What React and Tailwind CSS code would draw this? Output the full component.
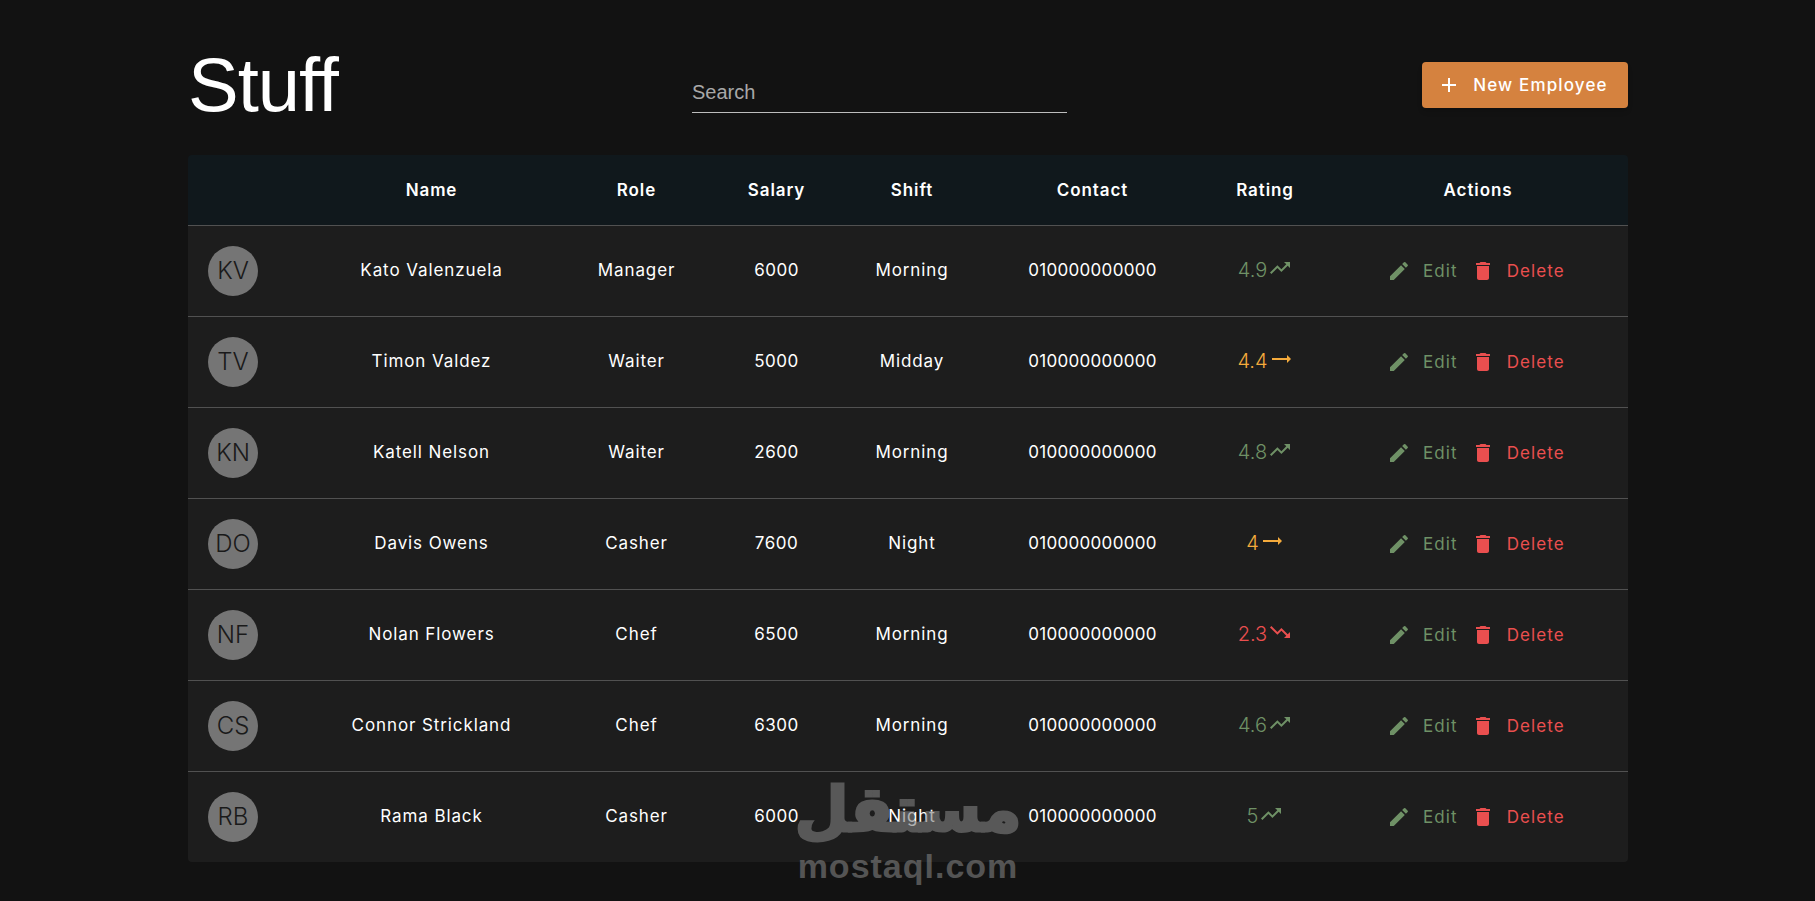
const Icon = ({ d, className }) => (
  <svg viewBox="0 0 24 24" className={className} fill="currentColor" aria-hidden="true">
    <path d={d} />
  </svg>
);

const up = "m16 6 2.29 2.29-4.88 4.88-4-4L2 16.59 3.41 18l6-6 4 4 6.3-6.29L22 12V6z";
const flat = "m22 12-4-4v3H3v2h15v3z";
const down = "m16 18 2.29-2.29-4.88-4.88-4 4L2 7.41 3.41 6l6 6 4-4 6.3 6.29L22 12v6z";
const edit = "M3 17.25V21h3.75L17.81 9.94l-3.75-3.75L3 17.25zM20.71 7.04c.39-.39.39-1.02 0-1.41l-2.34-2.34a.9959.9959 0 0 0-1.41 0l-1.83 1.83 3.75 3.75 1.83-1.83z";
const trash = "M6 19c0 1.1.9 2 2 2h8c1.1 0 2-.9 2-2V7H6v12zM19 4h-3.5l-1-1h-5l-1 1H5v2h14V4z";
const add = "M19 13h-6v6h-2v-6H5v-2h6V5h2v6h6v2z";

const rows = [
  ["KV", "Kato Valenzuela", "Manager", "6000", "Morning", "4.9"],
  ["TV", "Timon Valdez", "Waiter", "5000", "Midday", "4.4"],
  ["KN", "Katell Nelson", "Waiter", "2600", "Morning", "4.8"],
  ["DO", "Davis Owens", "Casher", "7600", "Night", "4"],
  ["NF", "Nolan Flowers", "Chef", "6500", "Morning", "2.3"],
  ["CS", "Connor Strickland", "Chef", "6300", "Morning", "4.6"],
  ["RB", "Rama Black", "Casher", "6000", "Night", "5"],
];

function Rating({ value }) {
  const n = parseFloat(value);
  const tone = n >= 4.5 ? "text-[#6f9166]" : n >= 3 ? "text-[#f5ab3c]" : "text-[#ea4f4f]";
  const d = n >= 4.5 ? up : n >= 3 ? flat : down;
  return (
    <span className={`inline-flex items-center justify-center gap-px text-[20px] font-light ${tone}`}>
      <span className="-translate-y-px">{value}</span>
      <Icon d={d} className="w-6 h-6 -translate-y-[3px]" />
    </span>
  );
}

function Row({ row, last }) {
  const [initials, name, role, salary, shift, rating] = row;
  const cell = `text-center align-middle ${last ? "" : "border-b border-[#515151]"}`;
  return (
    <tr className={`bg-[#1d1d1d] text-white text-[17px] ${last ? "h-[90px]" : "h-[91px]"}`}>
      <td className={`pl-[20px] ${cell}`}>
        <div className="w-[50px] h-[50px] rounded-full bg-[#757575] text-[#1a1a1a] text-[24px] font-light flex items-center justify-center">
          {initials}
        </div>
      </td>
      <td className={`tracking-[0.9px] ${cell}`}>{name}</td>
      <td className={`tracking-[0.9px] ${cell}`}>{role}</td>
      <td className={`tracking-[0.5px] ${cell}`}>{salary}</td>
      <td className={`tracking-[0.9px] ${cell}`}>{shift}</td>
      <td className={`tracking-[0.3px] ${cell}`}>010000000000</td>
      <td className={cell}><Rating value={rating} /></td>
      <td className={`text-left ${cell}`}>
        <div className="flex items-center pl-[59px] tracking-[1.1px]">
          <span className="flex items-center gap-[12px] text-[#6f9166]">
            <Icon d={edit} className="w-6 h-6" />
            <span className="translate-y-px">Edit</span>
          </span>
          <span className="flex items-center gap-[12px] text-[#ea4f4f] ml-[13px]">
            <Icon d={trash} className="w-6 h-6" />
            <span className="translate-y-px">Delete</span>
          </span>
        </div>
      </td>
    </tr>
  );
}

export default function App() {
  const heads = ["", "Name", "Role", "Salary", "Shift", "Contact", "Rating", "Actions"];
  return (
    <div className="relative min-h-screen bg-[#121212] font-['Inter',sans-serif] overflow-hidden">
      <div className="w-[1440px] ml-[188px] pt-[40px]">
        <header className="flex items-center justify-between mb-[25px] h-[90px]">
          <h1 className="font-['Liberation_Sans',sans-serif] text-[76px] leading-[90px] tracking-[-1px] text-white w-[149px] whitespace-nowrap">
            Stuff
          </h1>
          <input
            placeholder="Search"
            className="w-[375px] h-[56px] pt-[16px] border-b border-[#bdbdbd] bg-transparent outline-none font-['Liberation_Sans',sans-serif] text-[20px] text-white placeholder:text-[#a8a8a8]"
          />
          <button className="w-[206px] h-[46px] pr-[5px] rounded bg-[#d5823f] text-white text-[17px] tracking-[1.15px] font-medium flex items-center justify-center gap-[12px] shadow-md">
            <Icon d={add} className="w-6 h-6" />
            <span className="translate-y-px">New Employee</span>
          </button>
        </header>
        <div className="rounded overflow-hidden">
          <table className="w-full table-fixed border-separate border-spacing-0">
            <colgroup>
              <col className="w-[114px]" />
              <col className="w-[259px]" />
              <col className="w-[151px]" />
              <col className="w-[129px]" />
              <col className="w-[142px]" />
              <col className="w-[219px]" />
              <col className="w-[126px]" />
              <col className="w-[300px]" />
            </colgroup>
            <thead>
              <tr className="bg-[#10181c] h-[71px] text-white text-[17px] tracking-[0.9px]">
                {heads.map((h, i) => (
                  <th key={i} className="font-semibold text-center pt-[2px] border-b border-[#515151]">{h}</th>
                ))}
              </tr>
            </thead>
            <tbody>
              {rows.map((r, i) => (
                <Row key={r[0]} row={r} last={i === rows.length - 1} />
              ))}
            </tbody>
          </table>
        </div>
      </div>
      <div className="absolute left-[798px] top-[772px] w-[220px] flex flex-col items-center text-[#808080] opacity-60 pointer-events-none font-bold">
        <span className="font-['DejaVu_Sans',sans-serif] text-[62px] leading-[76px] [-webkit-text-stroke:3px_#808080]">مستقل</span>
        <span className="font-['Liberation_Sans',sans-serif] text-[34px] leading-[36px] tracking-[1px]">mostaql.com</span>
      </div>
    </div>
  );
}
